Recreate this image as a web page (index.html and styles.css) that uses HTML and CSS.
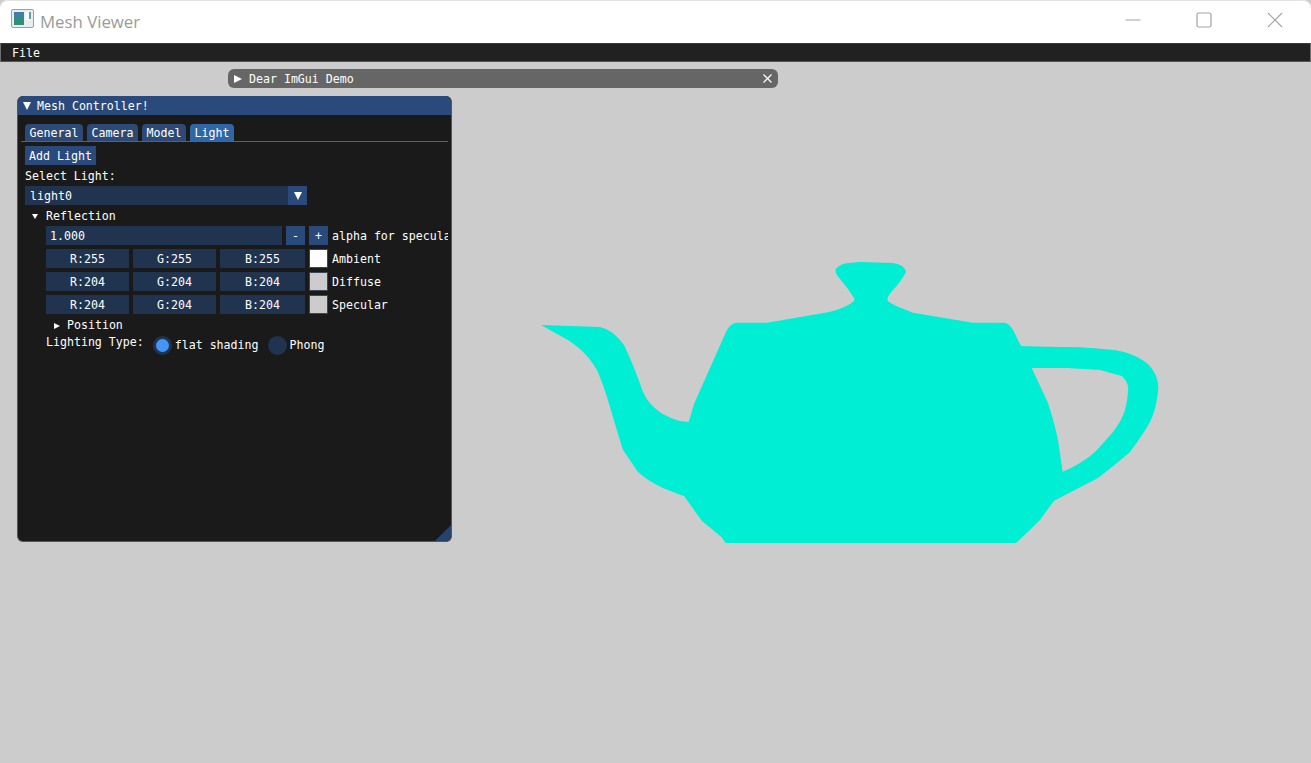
FILE: index.html
```html
<!DOCTYPE html>
<html>
  <head>
    <meta charset="UTF-8">
    <title>Mesh Viewer</title>
    <link rel="stylesheet" href="styles.css">
  </head>
  <body>
    <div class="titlebar">
      <svg class="app-icon" width="24" height="20" viewBox="0 0 24 20">
        <rect x="0.5" y="0.5" width="22" height="18" rx="1.5" fill="#e8eef0" stroke="#9aa0a6"/>
        <rect x="3" y="3" width="10" height="13" fill="#2f8f78"/>
        <rect x="3" y="3" width="10" height="5" fill="#3f7fa8"/>
        <rect x="14" y="3" width="6" height="8" fill="#f7f9fa"/>
        <rect x="18" y="3" width="2" height="7" fill="#5f9fa0"/>
      </svg>
      <span class="app-title">Mesh Viewer</span>
      <div class="caption">
        <svg width="16" height="16" viewBox="0 0 16 16"><path d="M0.5 8H15.5" stroke="#a3a3a3" fill="none"/></svg>
        <svg width="16" height="16" viewBox="0 0 16 16"><rect x="1" y="1" width="14" height="14" rx="1.5" stroke="#a3a3a3" stroke-width="1.2" fill="none"/></svg>
        <svg width="16" height="16" viewBox="0 0 16 16"><path d="M1 1L15 15M15 1L1 15" stroke="#a3a3a3" stroke-width="1.1" fill="none"/></svg>
      </div>
    </div>
    <div class="menubar"><span>File</span></div>

    <div class="canvas">
      <svg class="teapot" width="1311" height="763" viewBox="0 0 1311 763">
        <path fill="#00eed3" fill-rule="evenodd" d="M541 325L600 327Q612 329 624 345Q634 366 643 392Q648 404 661 413Q672 419 680 421L688.7 422L694 404L726 332Q730 323 737 322.7L767 322.7L828 312.3Q842 309 850 304Q856 300 854 298Q848 288 840 279Q832 270 838 266.7Q843 263 848 263L860 262L893 263Q905 265 906 272Q900 283 892 291Q886 298 888 301Q890 304 913 312.7L973 322.7L1005 322.7Q1011 324 1016 336L1021 346L1046.7 346.7L1080 347.3Q1110 349 1123 351.7Q1135 355 1144 361Q1153 367 1156.7 378Q1159 385 1158 392Q1156 410 1150 422Q1144 433 1130 452Q1115 465 1098 478L1054 500.7L1040 520Q1034 526 1027 532.7L1016 543L725.7 543L721.7 537.3L701.7 520.7L684 496Q675 493 663 488Q648 481 638 472L623 450Q616 428 610 407Q604 386 597 370Q590 358 580 349Q574 344 568 340ZM1031.7 368L1048 403Q1055 425 1058 440L1062.7 471.7Q1072 468 1080 463Q1090 457 1097 450Q1105 441 1113 432Q1122 420 1125 410Q1128 398 1128.3 388Q1127 380 1121.7 376L1100 370L1066.7 368Z"/>
      </svg>

      <div class="demo-bar">
        <span class="arrow-right big"></span>
        <span class="demo-title">Dear ImGui Demo</span>
        <svg class="demo-close" width="9" height="9" viewBox="0 0 9 9"><path d="M0.5 0.5L8.5 8.5M8.5 0.5L0.5 8.5" stroke="#fff" stroke-width="1.2" fill="none"/></svg>
      </div>

      <div class="panel">
        <div class="panel-title">
          <span class="arrow-down big"></span>
          <span>Mesh Controller!</span>
        </div>
        <div class="panel-body">
          <div class="tabs">
            <span class="tab w-general">General</span>
            <span class="tab w-camera">Camera</span>
            <span class="tab w-model">Model</span>
            <span class="tab active w-light">Light</span>
          </div>
          <button class="btn add-light">Add Light</button>
          <div class="label select-label">Select Light:</div>
          <div class="combo">
            <span class="combo-text">light0</span>
            <span class="combo-arrow"><span class="arrow-down big"></span></span>
          </div>
          <div class="tree-node reflection"><span class="arrow-down small"></span>Reflection</div>
          <div class="indent">
            <div class="row">
              <div class="field input-alpha">1.000</div>
              <button class="btn step">-</button>
              <button class="btn step">+</button>
              <span class="row-label clipped">alpha for specular</span>
            </div>
            <div class="row">
              <div class="field rgb">R:255</div>
              <div class="field rgb">G:255</div>
              <div class="field rgb wide">B:255</div>
              <span class="swatch white"></span>
              <span class="row-label">Ambient</span>
            </div>
            <div class="row">
              <div class="field rgb">R:204</div>
              <div class="field rgb">G:204</div>
              <div class="field rgb wide">B:204</div>
              <span class="swatch"></span>
              <span class="row-label">Diffuse</span>
            </div>
            <div class="row">
              <div class="field rgb">R:204</div>
              <div class="field rgb">G:204</div>
              <div class="field rgb wide">B:204</div>
              <span class="swatch"></span>
              <span class="row-label">Specular</span>
            </div>
            <div class="tree-node position"><span class="arrow-right small"></span>Position</div>
            <div class="lighting">
              <span class="lighting-label">Lighting Type:</span>
              <span class="radio on"></span>
              <span class="radio-text">flat shading</span>
              <span class="radio"></span>
              <span class="radio-text">Phong</span>
            </div>
          </div>
        </div>
        <span class="grip"></span>
      </div>
    </div>
  </body>
</html>
```

FILE: styles.css
```css
html, body {
  margin: 0;
  height: 100%;
  overflow: hidden;
}
body {
  display: flex;
  flex-direction: column;
  background-color: #cccccc;
  font-family: "DejaVu Sans Mono", monospace;
  font-size: 11.6px;
  color: #ffffff;
}

/* window frame */
.titlebar {
  height: 43px;
  flex: none;
  display: flex;
  align-items: center;
  background-color: #ffffff;
  border-radius: 8px 8px 0 0;
  box-shadow: inset 0 1px 0 #e4e4e4;
}
.app-icon {
  margin-left: 11px;
  margin-top: -5px;
}
.app-title {
  margin-left: 5px;
  font-family: "Open Sans", sans-serif;
  font-size: 16.8px;
  color: #9a9a9a;
}
.caption {
  margin-left: auto;
  margin-right: 28px;
  margin-top: -3px;
  display: flex;
  gap: 55px;
}
.menubar {
  height: 19px;
  flex: none;
  box-sizing: border-box;
  padding-left: 11px;
  line-height: 19px;
  background-color: #212121;
  border-top: 1px solid #3a3a3a;
  border-bottom: 1px solid #555555;
  border-left: 1px solid #707070;
  border-right: 1px solid #707070;
}

/* gl viewport, windows float over it */
.canvas {
  position: relative;
  flex: 1;
}
.teapot {
  position: absolute;
  left: 0;
  top: -62px;
}
.demo-bar {
  position: absolute;
  left: 228px;
  top: 7px;
  width: 550px;
  height: 19px;
  box-sizing: border-box;
  display: flex;
  align-items: center;
  padding: 0 6px;
  background-color: #666666;
  border-radius: 6px;
}
.demo-title {
  margin-left: 7px;
}
.demo-close {
  margin-left: auto;
}
.panel {
  position: absolute;
  left: 17px;
  top: 34px;
  width: 435px;
  height: 446px;
  box-sizing: border-box;
  background-color: #1a1a1a;
  border: 1px solid #55555f;
  border-top: none;
  border-radius: 6px;
  overflow: hidden;
}
.panel-title {
  height: 19px;
  display: flex;
  align-items: center;
  gap: 6px;
  padding-left: 5px;
  background-color: #294a7a;
}
.panel-body {
  padding: 9px 3px 0 7px;
}
.grip {
  position: absolute;
  right: 0;
  bottom: 0;
  width: 0;
  height: 0;
  border-left: 16px solid transparent;
  border-bottom: 16px solid #25436c;
}

/* arrows */
.arrow-down, .arrow-right {
  display: inline-block;
  width: 0;
  height: 0;
  flex: none;
}
.arrow-down.big {
  border-left: 4.5px solid transparent;
  border-right: 4.5px solid transparent;
  border-top: 8px solid #ffffff;
}
.arrow-right.big {
  border-top: 4.5px solid transparent;
  border-bottom: 4.5px solid transparent;
  border-left: 8px solid #ffffff;
}
.arrow-down.small {
  border-left: 3px solid transparent;
  border-right: 3px solid transparent;
  border-top: 5px solid #ffffff;
  margin-right: 8px;
  margin-top: -1px;
}
.arrow-right.small {
  border-top: 3px solid transparent;
  border-bottom: 3px solid transparent;
  border-left: 6px solid #ffffff;
  margin-right: 7px;
}

/* tabs */
.tabs {
  display: flex;
  gap: 4px;
  height: 17px;
  border-bottom: 1px solid #3369ad;
  margin-left: -4px;
  padding-left: 4px;
}
.tab {
  height: 17px;
  line-height: 18px;
  text-align: center;
  background-color: #2d4a76;
  border-radius: 4px 4px 0 0;
}
.tab.active {
  background-color: #2f66a8;
}
.w-general { width: 58px; }
.w-camera { width: 51px; }
.w-model { width: 44px; }
.w-light { width: 44px; }

/* controls */
.btn {
  display: block;
  height: 19px;
  padding: 0;
  border: none;
  font: inherit;
  color: #ffffff;
  background-color: #294a7a;
}
.add-light {
  width: 71px;
  margin-top: 4px;
}
.label, .tree-node {
  height: 19px;
  line-height: 19px;
}
.select-label {
  height: 17px;
  margin-top: 2px;
}
.combo {
  width: 282px;
  height: 19px;
  margin-top: 2px;
  display: flex;
  justify-content: space-between;
  background-color: #203450;
}
.combo-text {
  line-height: 21px;
  padding-left: 5px;
}
.combo-arrow {
  width: 19px;
  display: flex;
  align-items: center;
  justify-content: center;
  background-color: #294a7a;
}
.tree-node {
  display: flex;
  align-items: center;
}
.reflection {
  margin-top: 2px;
  padding-left: 7px;
}
.indent {
  padding-left: 21px;
}
.row {
  display: flex;
  align-items: center;
  gap: 4px;
  height: 19px;
  margin-bottom: 4px;
  white-space: nowrap;
}
.field {
  height: 19px;
  line-height: 21px;
  box-sizing: border-box;
  background-color: #203450;
}
.input-alpha {
  width: 236px;
  padding-left: 4px;
}
.rgb {
  width: 83px;
  text-align: center;
}
.rgb.wide {
  width: 85px;
}
.step {
  width: 19px;
}
.row-label {
  display: block;
  margin-top: 1px;
}
.clipped {
  width: 116px;
  overflow: hidden;
}
.swatch {
  width: 17px;
  height: 17px;
  background-color: #cccccc;
  border: 1px solid #3d4656;
}
.swatch.white {
  background-color: #ffffff;
}
.position {
  padding-left: 8px;
  margin-top: -2px;
}
.lighting {
  display: flex;
  align-items: center;
  height: 19px;
}
.lighting-label {
  margin-top: -6px;
  margin-right: 9px;
}
.radio {
  width: 19px;
  height: 19px;
  box-sizing: border-box;
  border-radius: 50%;
  background-color: #203450;
  margin-right: 3px;
  margin-top: 1px;
}
.radio.on {
  border: 3px solid #203450;
  background-color: #4296fa;
}
.radio-text {
  margin-right: 9px;
  margin-top: 1px;
}
```
